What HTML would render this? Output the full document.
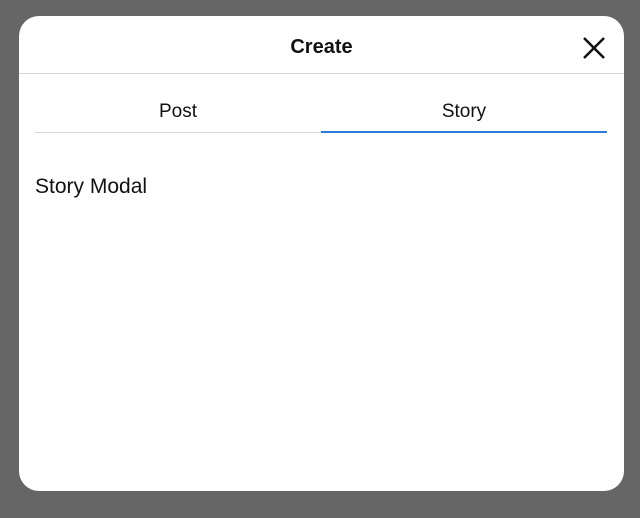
<!DOCTYPE html>
<html><head><style>
body{margin:0;width:640px;height:518px;background:#666;font-family:"Liberation Sans",sans-serif;position:relative;overflow:hidden}
.m{position:absolute;left:19px;top:16px;width:605px;height:475px;background:#fff;border-radius:20px}
.h{position:absolute;left:0;right:0;top:0;height:57px;border-bottom:1px solid #d8d8d8}
.t{position:absolute;left:0;right:0;top:20px;text-align:center;font-size:20px;font-weight:bold;color:#111}
.x{position:absolute;left:563px;top:20px}
.tab{position:absolute;top:85px;width:286px;text-align:center;font-size:19px;color:#111}
.ln{position:absolute;top:115px;height:2px}
.c{position:absolute;left:16px;top:159px;font-size:21px;color:#111}
</style></head><body>
<div class="m">
<div class="h"><div class="t">Create</div>
<svg class="x" width="24" height="24" viewBox="0 0 24 24"><path d="M2 2L22 22M22 2L2 22" stroke="#111" stroke-width="2.6"/></svg></div>
<div class="tab" style="left:16px">Post</div>
<div class="tab" style="left:302px">Story</div>
<div class="ln" style="left:16px;width:286px;background:#d8d8d8;height:1px;top:116px"></div>
<div class="ln" style="left:302px;width:286px;background:#2b7bd8"></div>
<div class="c">Story Modal</div>
</div>
</body></html>
